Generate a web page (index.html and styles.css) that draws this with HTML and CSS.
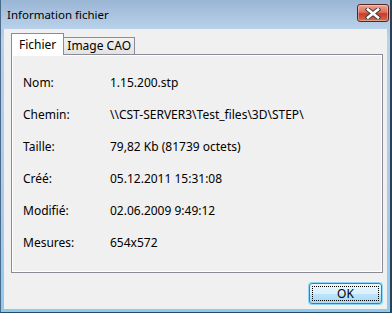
FILE: index.html
```html
<!DOCTYPE html>
<html lang="fr">
<head>
    <meta charset="UTF-8">
    <title>Information fichier</title>
    <link rel="stylesheet" href="styles.css">
</head>
<body>
    <div class="window">
        <div class="titlebar">
            <span class="title">Information fichier</span>
            <div class="close">
                <svg width="16" height="11" viewBox="0 0 16 11">
                    <path d="M3 1.5 L13 9.5 M13 1.5 L3 9.5" stroke="#3a3a3a" stroke-width="4.4" stroke-linecap="square" fill="none"/>
                    <path d="M3 1.5 L13 9.5 M13 1.5 L3 9.5" stroke="#ffffff" stroke-width="2.6" stroke-linecap="square" fill="none"/>
                </svg>
            </div>
        </div>

        <div class="client">
            <div class="tabs">
                <div class="tab active">Fichier</div>
                <div class="tab">Image CAO</div>
            </div>

            <div class="panel">
                <div class="row"><span class="label">Nom:</span><span class="value">1.15.200.stp</span></div>
                <div class="row"><span class="label">Chemin:</span><span class="value">\\CST-SERVER3\Test_files\3D\STEP\</span></div>
                <div class="row"><span class="label">Taille:</span><span class="value">79,82 Kb (81739 octets)</span></div>
                <div class="row"><span class="label">Créé:</span><span class="value">05.12.2011 15:31:08</span></div>
                <div class="row"><span class="label">Modifié:</span><span class="value">02.06.2009 9:49:12</span></div>
                <div class="row"><span class="label">Mesures:</span><span class="value">654x572</span></div>
            </div>

            <div class="footer">
                <div class="ok"><span class="focus">OK</span></div>
            </div>
        </div>
    </div>
</body>
</html>
```

FILE: styles.css
```css
body {
    margin: 0;
    font-family: "Noto Sans", sans-serif;
    font-size: 11px;
    color: #000;
}
.window {
    width: 392px;
    height: 313px;
    box-sizing: border-box;
    display: flex;
    flex-direction: column;
    background: linear-gradient(#9fbbd9, #b9d1ea 40px, #a9c9ec 200px, #8ccbee);
    border-left: 1px solid #4a6b8c;
    border-right: 2px solid #2b3f55;
    border-bottom: 1px solid #2b4a66;
}
.titlebar {
    height: 29px;
    display: flex;
    align-items: flex-start;
    justify-content: space-between;
    padding-left: 6px;
    background: linear-gradient(#9ab6d5, #b9d1ea);
}
.title {
    font-size: 11.5px;
    line-height: 29px;
}
.close {
    margin-top: 4px;
    margin-right: 1px;
    width: 30px;
    height: 16px;
    border: 1px solid #5a241c;
    border-radius: 3px;
    background: linear-gradient(#eba493, #d9705d 45%, #c73c28 55%, #d66a4f);
    box-shadow: inset 0 0 0 1px rgba(255,255,255,0.35);
    display: flex;
    align-items: center;
    justify-content: center;
}
.client {
    flex: 1;
    margin: 0 3px 3px 3px;
    background: #f0f0f0;
    padding: 4px 4px 0 7px;
    display: flex;
    flex-direction: column;
}
.tabs {
    display: flex;
    align-items: flex-end;
    height: 21px;
    position: relative;
    z-index: 1;
}
.tab {
    height: 16px;
    line-height: 15px;
    padding: 0 3px;
    border: 1px solid #898c95;
    border-bottom: none;
    background: linear-gradient(#f2f2f2, #e3e3e3);
    margin-left: -1px;
    font-size: 12px;
}
.tab.active {
    height: 21px;
    line-height: 21px;
    padding: 0 7px;
    margin-left: 0;
    background: #fff;
    position: relative;
    z-index: 2;
    margin-bottom: -1px;
}
.panel {
    height: 219px;
    box-sizing: border-box;
    border: 1px solid #898c95;
    box-shadow: inset 0 0 0 1px #fff;
    background: #f0f0f0;
    padding: 12px 11px 0 11px;
}
.row {
    display: flex;
    height: 32px;
    line-height: 32px;
    font-size: 12px;
}
.label {
    width: 87px;
}
.footer {
    display: flex;
    justify-content: flex-end;
    padding: 10px 1px 0 0;
}
.ok {
    width: 67px;
    height: 15px;
    border: 1px solid #3c7fb1;
    border-radius: 3px;
    background: linear-gradient(#eaf6fd, #d9f0fc 50%, #bee6fd 50%, #a7d9f5);
    box-shadow: 0 0 0 1px #8ed6f8;
    padding: 2px;
}
.focus {
    display: block;
    height: 13px;
    line-height: 13px;
    border: 1px dotted #000;
    text-align: center;
    font-size: 12px;
}
```
